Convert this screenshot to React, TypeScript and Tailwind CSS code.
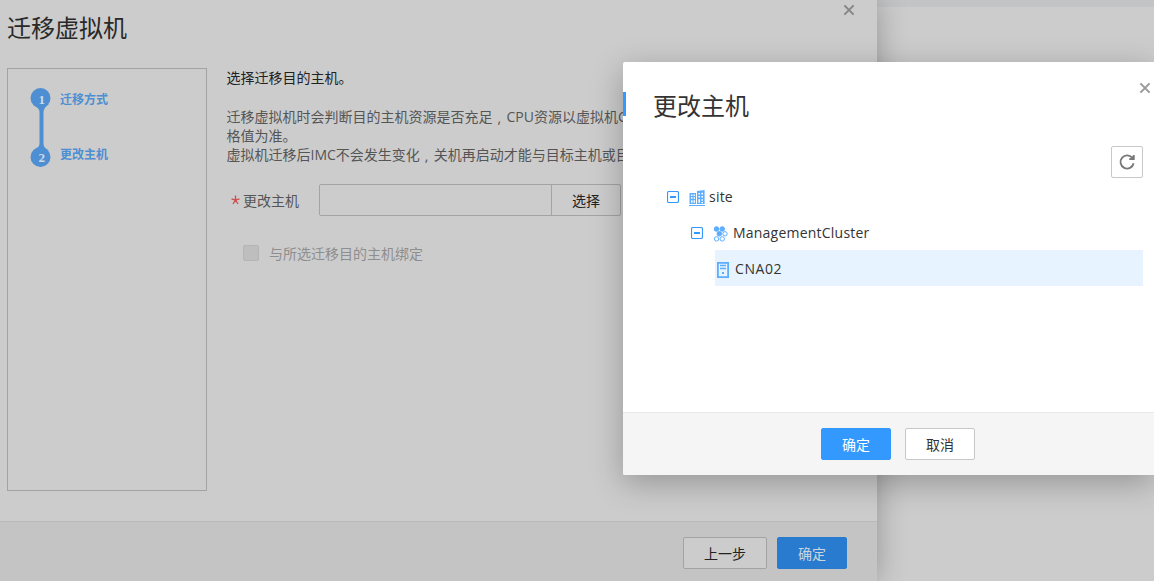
import type { ReactNode } from 'react';

function CloseIcon({ className }: { className?: string }) {
  return (
    <svg className={className} width="12" height="12" viewBox="0 0 12 12" fill="none" stroke="currentColor" strokeWidth="2">
      <path d="M1.4 1.4 L10.6 10.6 M10.6 1.4 L1.4 10.6" />
    </svg>
  );
}

function RefreshIcon() {
  return (
    <svg width="18" height="18" viewBox="0 0 18 18" fill="none" stroke="#777" strokeWidth="1.8">
      <path d="M15.6 10.3 A6.6 6.6 0 1 1 14.6 5.3" />
      <path d="M15.8 1.9 V6.2 H11.2" />
      <path d="M12 5.6 L15.4 2.6 V6 Z" fill="#777" stroke="none" />
    </svg>
  );
}

function CollapseIcon() {
  return (
    <svg width="12" height="12" viewBox="0 0 12 12" fill="none" stroke="#3399ff">
      <rect x="0.5" y="0.5" width="11" height="11" rx="1.5" strokeWidth="1.2" />
      <path d="M3 6 H9" strokeWidth="2" />
    </svg>
  );
}

function SiteIcon() {
  return (
    <svg width="16" height="16" viewBox="0 0 16 16" fill="#5eaeff">
      <path d="M0 15 H16 V16 H0 Z" />
      <path
        fillRule="evenodd"
        d="M0.5 3 H7 V14 H0.5 Z M2 4.5 V6 H3.5 V4.5 Z M4.5 4.5 V6 H6 V4.5 Z M2 7.2 V8.8 H3.5 V7.2 Z M4.5 7.2 V8.8 H6 V7.2 Z M2 10.2 V12.8 H3.5 V10.2 Z M4.5 10.2 V12.8 H6 V10.2 Z"
      />
      <path
        fillRule="evenodd"
        d="M8 1 L15.6 0 V14 H8 Z M9.4 3 V4.4 H11 V3 Z M12.4 2.8 V4.4 H14 V2.8 Z M9.4 6 V7.6 H11 V6 Z M12.4 6 V7.6 H14 V6 Z M9.4 9.2 V12.8 H11 V9.2 Z M12.4 9.2 V10.8 H14 V9.2 Z M12.4 12 V13.2 H14 V12 Z"
      />
    </svg>
  );
}

function ClusterIcon() {
  return (
    <svg width="16" height="16" viewBox="0 0 16 16" fill="#5eaeff" stroke="#5eaeff">
      <circle cx="3.5" cy="3" r="2.3" />
      <circle cx="9.2" cy="3" r="2.3" />
      <circle cx="6.3" cy="7.8" r="2.3" />
      <circle cx="12" cy="7.8" r="2.2" fill="white" />
      <circle cx="3.5" cy="12.9" r="2.2" fill="white" />
      <circle cx="9.2" cy="12.9" r="2.2" fill="white" />
    </svg>
  );
}

function HostIcon() {
  return (
    <svg width="12" height="16" viewBox="0 0 12 16" fill="none" stroke="#5eaeff">
      <rect x="0.9" y="0.9" width="10.2" height="14.2" strokeWidth="1.8" />
      <path d="M3 3.5 H9 M3 6.5 H9" strokeWidth="1.3" />
      <path d="M5 11 H7" strokeWidth="2" />
    </svg>
  );
}

function Comma() {
  return <span className="inline-block w-[14px] translate-x-[5px] translate-y-px">,</span>;
}

function StepTrack() {
  return (
    <svg width="21" height="79" viewBox="0 0 21 79">
      <g fill="#4d8fd2">
        <circle cx="10.5" cy="10" r="10" />
        <circle cx="10.5" cy="69" r="10" />
        <path d="M3 17 Q9.5 20 9.5 24 V56 Q9 60 3 62.5 H19 Q13.8 60 13.5 56 V24 Q13.5 20 19 16 Z" />
      </g>
      <g className="font-['Liberation_Serif',serif] font-bold" fill="#d0dbe7" fontSize="13" textAnchor="middle">
        <text x="11.7" y="15.5">1</text>
        <text x="11.7" y="74">2</text>
      </g>
    </svg>
  );
}

function Button({ className, children }: { className: string; children: ReactNode }) {
  return (
    <button className={`flex h-8 items-center justify-center rounded-[2px] border pt-px text-sm leading-none ${className}`}>{children}</button>
  );
}

function MigrateDialog() {
  return (
    <section className="flex h-full w-[877px] shrink-0 flex-col bg-[#ccc] shadow-[0_0_28px_rgba(0,0,0,0.28)]">
      <header className="flex h-[68px] shrink-0 justify-between pl-[7px] pr-[22px]">
        <h1 className="pt-[10px] text-2xl leading-9 text-[#292929]">迁移虚拟机</h1>
        <CloseIcon className="mt-[4px] text-[#868686]" />
      </header>
      <div className="flex h-[453px] shrink-0 pl-[7px]">
        <nav className="flex h-[423px] w-[200px] shrink-0 border border-[#a3a3a3] pl-[22px] pt-[19px]">
          <StepTrack />
          <div className="ml-[9px] flex flex-col text-xs leading-[18px] font-bold text-[#4d8fd2]">
            <span className="mt-[3px]">迁移方式</span>
            <span className="mt-[37px]">更改主机</span>
          </div>
        </nav>
        <div className="ml-[19.5px] w-[600px] text-sm leading-[19px] whitespace-nowrap text-[#555]">
          <p className="text-[#222]">选择迁移目的主机。</p>
          <div className="mt-5">
            <p>迁移虚拟机时会判断目的主机资源是否充足<Comma />CPU资源以虚拟机CPU规</p>
            <p>格值为准。</p>
            <p>虚拟机迁移后IMC不会发生变化<Comma />关机再启动才能与目标主机或目的</p>
          </div>
          <div className="mt-5 flex h-8 items-center">
            <svg className="ml-[4px]" width="9" height="10" viewBox="0 0 9 10" stroke="#d14a4a" strokeWidth="1.3" fill="none">
              <path d="M4.5 0.5 V5 M0.5 3.8 L4.5 5 L8.5 3.8 M2 9 L4.5 5 L7 9" />
            </svg>
            <span className="ml-[3.5px] w-[76px]">更改主机</span>
            <div className="flex h-8 w-[302px] rounded-[2px] border border-[#a3a3a3]">
              <input className="w-[231px] bg-transparent outline-none" />
              <button className="flex flex-1 items-center justify-center border-l border-[#a3a3a3] text-[#222]">选择</button>
            </div>
          </div>
          <label className="mt-[27px] flex items-center text-[#8e8e8e]">
            <span className="mr-[10px] ml-[16.5px] size-4 rounded-[2px] border border-[#b5b5b5] bg-[#bebebe]" />
            <span className="pt-px">与所选迁移目的主机绑定</span>
          </label>
        </div>
      </div>
      <footer className="flex flex-1 justify-end gap-[10px] border-t border-[#bababa] bg-[#c4c4c4] pt-[15px] pr-[30px]">
        <Button className="w-[84px] border-[#a3a3a3] bg-[#ccc] text-[#222]">上一步</Button>
        <Button className="w-[70px] border-[#297bcf] bg-[#297bcf] text-[#ccd5de]">确定</Button>
      </footer>
    </section>
  );
}

function ChangeHostDialog() {
  return (
    <section className="absolute top-[62px] left-[623px] flex h-[413px] w-[531px] flex-col rounded-l-[2px] bg-white text-[#333] shadow-[0_8px_32px_rgba(0,0,0,0.27)]">
      <header className="flex h-[84px] shrink-0 items-start pt-[30px]">
        <span className="h-6 w-[3px] bg-[#3399ff]" />
        <h2 className="mt-[-4px] ml-[27px] flex-1 text-2xl leading-9">更改主机</h2>
        <CloseIcon className="mt-[-10px] mr-[3px] text-[#999]" />
      </header>
      <div className="flex justify-end pr-[11px]">
        <button className="flex size-8 items-center justify-center rounded-[2px] border border-[#c8c8c8]">
          <RefreshIcon />
        </button>
      </div>
      <div className="flex flex-1 flex-col pr-[11px] text-sm tracking-[0.22px]">
        <div className="flex h-9 items-center pt-[2px] pl-11">
          <CollapseIcon />
          <span className="mr-1 ml-[10px] pt-px"><SiteIcon /></span>
          site
        </div>
        <div className="flex h-9 items-center pt-[2px] pl-[68px]">
          <CollapseIcon />
          <span className="mr-1 ml-[10px] pt-px"><ClusterIcon /></span>
          ManagementCluster
        </div>
        <div className="ml-[92px] flex h-9 items-center bg-[#e7f3fe] pt-[2px] pl-[2px]">
          <span className="mr-[6px] pt-[2px]"><HostIcon /></span>
          <span className="tracking-[0.6px]">CNA02</span>
        </div>
      </div>
      <footer className="flex h-[63px] shrink-0 justify-center gap-[14px] rounded-bl-[2px] border-t border-[#e9e9e9] bg-[#f5f5f5] pt-[15px] pl-[19px]">
        <Button className="w-[70px] border-[#3399ff] bg-[#3399ff] text-white">确定</Button>
        <Button className="w-[70px] border-[#c8c8c8] bg-white text-[#333]">取消</Button>
      </footer>
    </section>
  );
}

export default function App() {
  return (
    <main className="relative flex h-[581px] w-[1154px] overflow-hidden bg-[linear-gradient(#c2c4c6_7px,#cccccc_7px)] font-['Open_Sans','Noto_Sans_CJK_SC',sans-serif]">
      <MigrateDialog />
      <ChangeHostDialog />
    </main>
  );
}
